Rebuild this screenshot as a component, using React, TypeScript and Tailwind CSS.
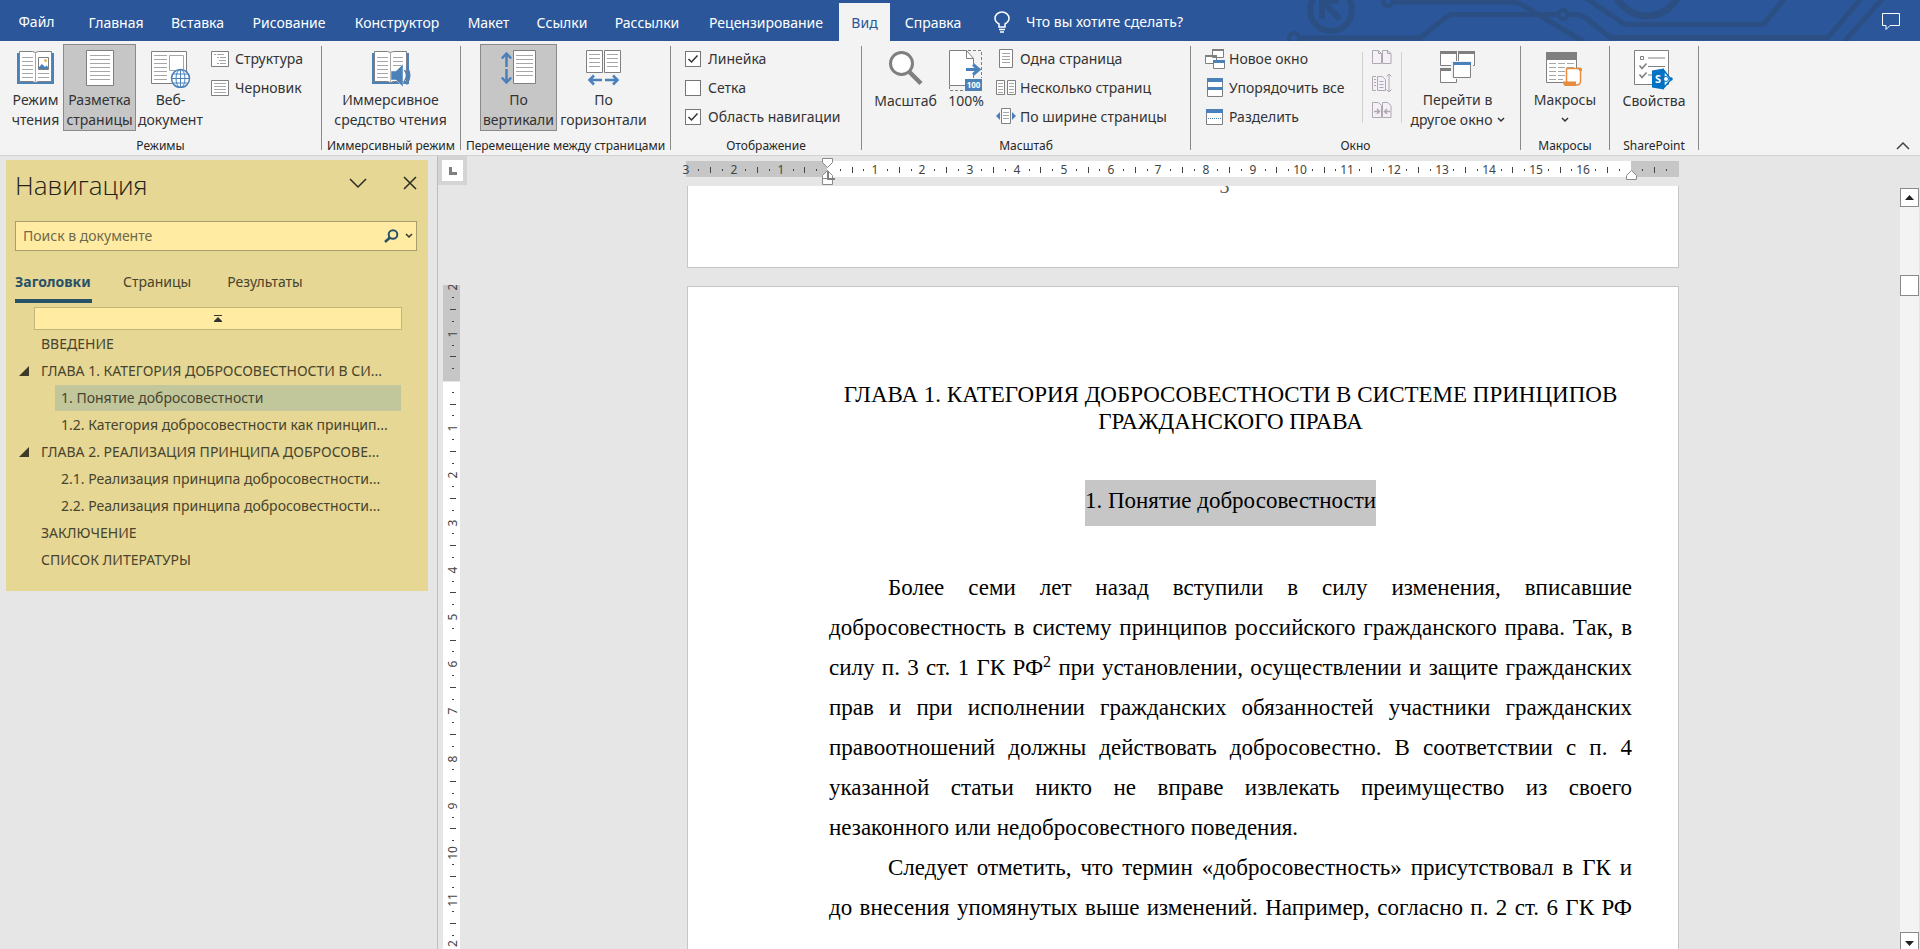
import React from "react";

const GREY = "#7f7f7f";
const BLUE = "#4a81b9";

const tabs = [
  { name: "Главная", width: "w-[82px]" },
  { name: "Вставка", width: "w-[81px]" },
  { name: "Рисование", width: "w-[102px]" },
  { name: "Конструктор", width: "w-[114px]" },
  { name: "Макет", width: "w-[69px]" },
  { name: "Ссылки", width: "w-[78px]" },
  { name: "Рассылки", width: "w-[92px]" },
  { name: "Рецензирование", width: "w-[146px]" },
  { name: "Вид", width: "w-[51px]", active: true },
  { name: "Справка", width: "w-[86px]" },
];

const headings = [
  { text: "ВВЕДЕНИЕ", level: 1 },
  { text: "ГЛАВА 1. КАТЕГОРИЯ ДОБРОСОВЕСТНОСТИ В СИ...", level: 1, open: true },
  { text: "1. Понятие добросовестности", level: 2, selected: true },
  { text: "1.2. Категория добросовестности как принцип...", level: 2 },
  { text: "ГЛАВА 2. РЕАЛИЗАЦИЯ ПРИНЦИПА ДОБРОСОВЕ...", level: 1, open: true },
  { text: "2.1. Реализация принципа добросовестности...", level: 2 },
  { text: "2.2. Реализация принципа добросовестности...", level: 2 },
  { text: "ЗАКЛЮЧЕНИЕ", level: 1 },
  { text: "СПИСОК ЛИТЕРАТУРЫ", level: 1 },
];

/* ---------- icons ---------- */

function Lines({ x, y, w, n, step = 4 }: { x: number; y: number; w: number; n: number; step?: number }) {
  const d = Array.from({ length: n }, (_, i) => `M${x} ${y + i * step + 0.5}h${w}`).join("");
  return <path d={d} stroke="#a6a6a6" fill="none" />;
}

function Book({ children }: { children?: React.ReactNode }) {
  return (
    <svg width="40" height="38" viewBox="0 0 40 38" fill="none">
      <path d="M1 3h37v31H1z" fill={BLUE} />
      <path d="M3.5 1.5h13l3 1 3-1h13v30h-13l-3 1-3-1h-13z" fill="#fff" stroke={GREY} />
      <path d="M19.5 2.5v29" stroke="#a6a6a6" />
      <Lines x={6} y={7} w={11} n={6} />
      {children}
    </svg>
  );
}

function ReadModeIcon() {
  return (
    <Book>
      <Lines x={22} y={23} w={11} n={2} />
      <path d="M22.5 7.5h10v12h-10z" fill="#fff" stroke={GREY} />
      <circle cx="29.5" cy="10.5" r="1.5" fill="#e8b25c" />
      <path d="M23 19v-2l3-3 3 3 1.5-1.5L32 17v2z" fill={BLUE} />
    </Book>
  );
}

function ImmersiveIcon() {
  return (
    <Book>
      <Lines x={22} y={7} w={10} n={3} />
      <path d="M20 21h5l7-7v23l-7-7h-5z" fill={BLUE} stroke="#f3f3f3" strokeWidth="0.5" />
      <path d="M33.5 20q4 5.5 0 11M35.5 16.5q6.5 9 0 18" stroke={BLUE} strokeWidth="1.5" />
    </Book>
  );
}

function PageIcon() {
  return (
    <svg width="28" height="38" viewBox="0 0 28 38" fill="none">
      <path d="M.5.5h27v35H.5z" fill="#fff" stroke={GREY} />
      <Lines x={4} y={5} w={20} n={7} />
    </svg>
  );
}

function WebIcon() {
  return (
    <svg width="40" height="38" viewBox="0 0 40 38" fill="none">
      <path d="M.5 1.5h35v32H.5z" fill="#fff" stroke={GREY} />
      <Lines x={3} y={5} w={13} n={7} />
      <path d="M18.5 5.5h14v15h-14z" fill="#fff" stroke="#a6a6a6" />
      <circle cx="29.5" cy="28.5" r="9" fill="#fff" stroke={BLUE} strokeWidth="1.5" />
      <ellipse cx="29.5" cy="28.5" rx="4.5" ry="9" stroke={BLUE} />
      <path d="M29.5 19.5v18M20.5 28.5h18M22 24h15M22 33h15" stroke={BLUE} />
    </svg>
  );
}

function VerticalIcon() {
  return (
    <svg width="36" height="36" viewBox="0 0 36 36" fill="none">
      <path d="M12.5.5h22v33h-22z" fill="#fff" stroke={GREY} />
      <Lines x={15} y={5} w={17} n={6} />
      <path d="M5.5 3v14M5.5 19v13M.8 8.5l4.7-5 4.7 5M.8 27.5l4.7 5 4.7-5" stroke={BLUE} strokeWidth="2.5" />
    </svg>
  );
}

function HorizontalIcon() {
  return (
    <svg width="36" height="36" viewBox="0 0 36 36" fill="none">
      <path d="M.5.5h16v22H.5zM18.5.5h16v22h-16z" fill="#fff" stroke={GREY} />
      <Lines x={3} y={4} w={11} n={4} />
      <Lines x={21} y={4} w={11} n={4} />
      <path d="M3 30h13M19 30h13M8 25.5L3.5 30 8 34.5M27 25.5l4.5 4.5-4.5 4.5" stroke={BLUE} strokeWidth="2.5" />
    </svg>
  );
}

function ZoomIcon() {
  return (
    <svg width="36" height="36" viewBox="0 0 36 36" fill="none">
      <circle cx="13.5" cy="13.5" r="11" fill="#fff" stroke={GREY} strokeWidth="3" />
      <path d="M21.5 22L33 33.5" stroke={GREY} strokeWidth="4.5" />
    </svg>
  );
}

function HundredIcon() {
  return (
    <svg width="34" height="42" viewBox="0 0 34 42" fill="none">
      <path d="M.5.5h17l7 8v27H.5z" fill="#fff" />
      <path d="M24.5 14V8.500l-7-8H.5v35H16M17.5.5v8h7M24.5 25v3" stroke={GREY} />
      <path d="M19 .5h13.500V28M.5 36v4.500H16" stroke={GREY} strokeDasharray="3 2" />
      <path d="M17 19.5h12M24 14.5l6 5-6 5" stroke={BLUE} strokeWidth="3" />
      <path d="M16 29h17v12H16z" fill={BLUE} />
      <text x="24.5" y="38" fontSize="8" fontWeight="700" textAnchor="middle" fill="#fff">100</text>
    </svg>
  );
}

function SwitchWindowIcon() {
  return (
    <svg width="36" height="34" viewBox="0 0 36 34" fill="none">
      <path d="M.5 1.5h16v14H.5zM18.5 1.5h16v14h-16zM.5 18.5h16v14H.5z" fill="#fff" stroke={GREY} />
      <path d="M0 1h17v3H0zM18 1h17v3H18zM0 18h17v3H0z" fill={GREY} />
      <path d="M11 11h22v18H11z" fill="#f3f3f3" />
      <path d="M13.5 12.5h17v15h-17z" fill="#fff" stroke={GREY} />
      <path d="M13 12h18v3H13z" fill={BLUE} />
    </svg>
  );
}

function MacrosIcon() {
  return (
    <svg width="38" height="36" viewBox="0 0 38 36" fill="none">
      <path d="M.5 2.5h30v30H.5z" fill="#fff" stroke={GREY} />
      <path d="M0 2h31v8H0z" fill={GREY} />
      <path d="M3 13.5h25M3 17.5h25M3 21.5h17M3 25.5h17M3 29.5h14" stroke="#a6a6a6" strokeDasharray="7 2" />
      <path d="M20.5 32V18.5h14V31q0 4-4 4z" fill="#fff" stroke="#e78b3f" strokeWidth="1.5" />
      <path d="M17 31.500h13V36H20q-3 0-3-4.500zM31 17.800h3q2 0 2 3.200h-2.500z" fill="#e78b3f" />
    </svg>
  );
}

function PropertiesIcon() {
  return (
    <svg width="40" height="40" viewBox="0 0 40 40" fill="none">
      <path d="M.5.5h34v34H.5z" fill="#fff" stroke={GREY} />
      <path d="M6.5 6.5h3v3h-3zM14 8h17M14 16.5h17M14 25h5" stroke={GREY} />
      <path d="M5.5 15.5l2.5 3 4.5-5M5.5 24.5l2.5 3 4.5-5" stroke={GREY} strokeWidth="1.5" />
      <path d="M30 20.5l7 9-7 8z" fill="#fff" stroke="#0072c6" strokeWidth="1.5" />
      <circle cx="32" cy="29" r="2.5" fill="#fff" stroke="#0072c6" />
      <circle cx="37" cy="29" r="1.8" fill="#0072c6" />
      <path d="M18 20.5l12-2v21l-12-2z" fill="#0072c6" />
      <text x="24" y="33" fontSize="11" fontWeight="700" textAnchor="middle" fill="#fff">S</text>
    </svg>
  );
}

function Small({ children }: { children: React.ReactNode }) {
  return (
    <svg width="20" height="20" viewBox="0 0 20 20" fill="none" className="shrink-0">
      {children}
    </svg>
  );
}

const outlineIcon = (
  <Small>
    <path d="M.5 2.5h17v15H.5z" fill="#fff" stroke={GREY} />
    <path d="M3 5.5h2m1 0h7M6 8.5h2m1 0h6M8 11.5h7M6 14.5h2m1 0h6" stroke="#a6a6a6" />
  </Small>
);
const draftIcon = (
  <Small>
    <path d="M.5 2.5h17v15H.5z" fill="#fff" stroke={GREY} />
    <Lines x={3} y={5} w={12} n={4} step={3} />
  </Small>
);
const onePageIcon = (
  <Small>
    <path d="M3.5.5h13v18h-13z" fill="#fff" stroke={GREY} />
    <Lines x={6} y={4} w={8} n={4} step={3} />
  </Small>
);
const multiPageIcon = (
  <Small>
    <path d="M.5 2.5h8v14h-8zM11.5 2.5h8v14h-8z" fill="#fff" stroke={GREY} />
    <Lines x={2} y={5} w={5} n={4} step={3} />
    <Lines x={13} y={5} w={5} n={4} step={3} />
  </Small>
);
const pageWidthIcon = (
  <Small>
    <path d="M5.5 1.5h9v15h-9z" fill="#fff" stroke={GREY} />
    <Lines x={7} y={5} w={6} n={3} step={3} />
    <path d="M4 5v8L0 9zM16 5v8l4-4z" fill={BLUE} />
  </Small>
);
const newWindowIcon = (
  <Small>
    <path d="M7.5.5h11v8h-11zM.5 6.5h11v8H.5z" fill="#fff" stroke={GREY} />
    <path d="M7 0h12v2H7zM0 6h12v2H0z" fill={GREY} />
    <path d="M8.5 11.5h11v8h-11z" fill="#fff" stroke={GREY} />
    <path d="M8 11h12v3H8z" fill={BLUE} />
  </Small>
);
const arrangeIcon = (
  <Small>
    <path d="M2.5.5h15v18h-15z" fill="#fff" stroke={GREY} />
    <path d="M2 0h16v4H2zM2 9h16v3H2z" fill={BLUE} />
  </Small>
);
const splitIcon = (
  <Small>
    <path d="M1.5 2.5h16v15h-16z" fill="#fff" stroke={GREY} />
    <path d="M1 2h17v4H1z" fill={BLUE} />
    <path d="M3 11.5h13" stroke={BLUE} strokeDasharray="1 1" />
  </Small>
);
const sideBySideIcon = (
  <Small>
    <path d="M.5 3.5h6l3 3v10h-9zM10.5 3.5h5l3.5 3v10h-8.500z" fill="#f5f0f7" stroke="#aea8b0" />
    <path d="M6.5 3.5v3h3M15.5 3.5v3H19" stroke="#aea8b0" />
  </Small>
);
const syncScrollIcon = (
  <Small>
    <path d="M4 3.5H.5v14H4M5.5 3.5h5l3 3v11h-8z" fill="#f5f0f7" stroke="#aea8b0" />
    <path d="M2 6.5h2M2 9.5h2M2 12.5h2M7.5 8.5h4M7.5 11.5h4M7.5 14.5h4M17 1v18M14.5 3.5L17 1l2.5 2.5M14.5 16.5L17 19l2.5-2.5" stroke="#aea8b0" />
  </Small>
);
const resetWindowIcon = (
  <Small>
    <path d="M.5 2.5h6l3 3v12h-9zM10.5 2.5h5l3.5 3v12h-8.500z" fill="#f5f0f7" stroke="#aea8b0" />
    <path d="M2 11.5h5M5 9l2.5 2.5L5 14M18 11.5h-5M15 9l-2.5 2.5L15 14" stroke="#aea8b0" strokeWidth="1.5" />
  </Small>
);

/* ---------- ribbon parts ---------- */

interface BigButtonProps {
  icon: React.ReactNode;
  lines: string[];
  width: string;
  active?: boolean;
  arrow?: boolean;
}

function BigButton({ icon, lines, width, active, arrow }: BigButtonProps) {
  const look = active ? "border-[#8a8a8a] bg-[#c6c6c6]" : "border-transparent";
  return (
    <button className={`${width} ${look} flex h-[87px] shrink-0 flex-col items-center whitespace-nowrap border`}>
      <span className="flex h-[46px] items-start justify-center pt-[5px]">{icon}</span>
      {lines.map((line, i) => (
        <span key={line} className="flex items-center leading-5">
          {line}
          {arrow && i === lines.length - 1 && (
            <svg width="8" height="6" viewBox="0 0 8 6" fill="none" className={line ? "ml-1" : "my-[7px]"}>
              <path d="M1 1l3 3 3-3" stroke="#333" strokeWidth="1.5" />
            </svg>
          )}
        </span>
      ))}
    </button>
  );
}

function SmallButton({ icon, label }: { icon: React.ReactNode; label: string }) {
  return (
    <button className="flex h-[29px] items-center gap-1 whitespace-nowrap">
      {icon}
      {label}
    </button>
  );
}

function CheckRow({ label, checked }: { label: string; checked?: boolean }) {
  return (
    <label className="flex h-[29px] items-center gap-[7px] whitespace-nowrap">
      <span className="grid">
        <input type="checkbox" defaultChecked={checked} className="peer col-start-1 row-start-1 size-4 appearance-none border border-[#767676] bg-white" />
        <svg width="16" height="16" viewBox="0 0 16 16" fill="none" className="pointer-events-none invisible col-start-1 row-start-1 peer-checked:visible">
          <path d="M3.5 8l3 3 6-6.5" stroke="#333" strokeWidth="1.5" />
        </svg>
      </span>
      {label}
    </label>
  );
}

function Group({ label, width, children }: { label: string; width: string; children: React.ReactNode }) {
  return (
    <section className={`${width} flex shrink-0 flex-col justify-between border-r border-[#8a8a8a]`}>
      <div className="-mt-0.5 flex h-[87px]">{children}</div>
      <h2 className="text-center text-xs leading-[9px] whitespace-nowrap text-[#262626]">{label}</h2>
    </section>
  );
}

function TitleArt() {
  return (
    <svg width="640" height="41" viewBox="0 0 640 41" fill="none" stroke="#2b4f82" strokeWidth="5" className="absolute top-0 right-0" aria-hidden="true">
      <circle cx="51" cy="10" r="21" strokeWidth="6" />
      <path d="M59 1H42v18M43 2l17 17" strokeWidth="6" />
      <circle cx="108" cy="1" r="5" strokeWidth="4" />
      <path d="M114 2h118q6 0 12 4l60 36" />
      <circle cx="14" cy="38" r="5" strokeWidth="4" />
      <path d="M19 38h121l25-20q4-3.5 8-3.5h105" />
      <circle cx="283" cy="14.5" r="4.5" strokeWidth="4" />
      <path d="M288 14.5h6q8 0 14 5l22 18h218l34-40M564 42l40-45" />
      <circle cx="367" cy="-18" r="34" strokeWidth="7" />
      <path d="M304-3l39 26q3 1.5 6 1.5h130q4 0 6-2l21-26" />
    </svg>
  );
}

function Header() {
  return (
    <header className="relative flex h-[41px] shrink-0 items-end bg-[#2b579a] text-white">
      <TitleArt />
      <nav className="relative flex h-[38px] items-end">
        <button className="h-[38px] w-[75px] pr-0.5">Файл</button>
        {tabs.map((tab) => (
          <button key={tab.name} className={`${tab.width} ${tab.active ? "bg-[#f3f3f3] text-[#2b579a]" : ""} h-[38px] pt-0.5`}>
            {tab.name}
          </button>
        ))}
      </nav>
      <button className="relative ml-[18px] flex h-[38px] items-center gap-4">
        <svg width="16" height="22" viewBox="0 0 16 22" fill="none" stroke="#fff" strokeWidth="1.5">
          <path d="M5 16v-3Q1 10.500 1 7.500a7 6.500 0 0 1 14 0q0 3-4 5.500v3zM5 18.500h6M6 21h4" />
        </svg>
        Что вы хотите сделать?
      </button>
      <button className="relative mr-[19px] ml-auto flex h-[38px] items-center" aria-label="Примечания">
        <svg width="19" height="18" viewBox="0 0 19 18" fill="none" stroke="#fff">
          <path d="M.5.5h17v12H8l-4 4v-4H.5z" />
        </svg>
      </button>
    </header>
  );
}

function Ribbon() {
  return (
    <div className="flex h-[115px] shrink-0 border-b border-[#d2d2d2] bg-[#f3f3f3] pt-[5px] pb-[5px] text-[#333]">
      <Group label="Режимы" width="w-[322px]">
        <div className="flex pl-2">
          <BigButton icon={<ReadModeIcon />} lines={["Режим", "чтения"]} width="w-[55px]" />
          <BigButton icon={<PageIcon />} lines={["Разметка", "страницы"]} width="w-[73px]" active />
          <BigButton icon={<WebIcon />} lines={["Веб-", "документ"]} width="w-[69px]" />
        </div>
        <div className="flex flex-col pl-1.5">
          <SmallButton icon={outlineIcon} label="Структура" />
          <SmallButton icon={draftIcon} label="Черновик" />
        </div>
      </Group>
      <Group label="Иммерсивный режим" width="w-[139px]">
        <BigButton icon={<ImmersiveIcon />} lines={["Иммерсивное", "средство чтения"]} width="w-[137px]" />
      </Group>
      <Group label="Перемещение между страницами" width="w-[210px]">
        <div className="flex pl-[19px]">
          <BigButton icon={<VerticalIcon />} lines={["По", "вертикали"]} width="w-[77px]" active />
          <BigButton icon={<HorizontalIcon />} lines={["По", "горизонтали"]} width="w-[93px]" />
        </div>
      </Group>
      <Group label="Отображение" width="w-[191px]">
        <div className="flex flex-col pl-[14px]">
          <CheckRow label="Линейка" checked />
          <CheckRow label="Сетка" />
          <CheckRow label="Область навигации" checked />
        </div>
      </Group>
      <Group label="Масштаб" width="w-[329px]">
        <div className="flex pl-[7px]">
          <BigButton icon={<ZoomIcon />} lines={["Масштаб"]} width="w-[73px]" />
          <BigButton icon={<HundredIcon />} lines={["100%"]} width="w-[48px]" />
        </div>
        <div className="flex flex-col pl-1.5">
          <SmallButton icon={onePageIcon} label="Одна страница" />
          <SmallButton icon={multiPageIcon} label="Несколько страниц" />
          <SmallButton icon={pageWidthIcon} label="По ширине страницы" />
        </div>
      </Group>
      <Group label="Окно" width="w-[330px]">
        <div className="flex w-[171px] flex-col pl-[14px]">
          <SmallButton icon={newWindowIcon} label="Новое окно" />
          <SmallButton icon={arrangeIcon} label="Упорядочить все" />
          <SmallButton icon={splitIcon} label="Разделить" />
        </div>
        <div className="mt-2 mb-2 flex w-10 border-x border-[#d0d0d0] pl-[9px]">
          <div className="-mt-2 flex flex-col">
            <button className="flex h-[29px] items-center" aria-label="Рядом">{sideBySideIcon}</button>
            <button className="flex h-[29px] items-center" aria-label="Синхронная прокрутка">{syncScrollIcon}</button>
            <button className="flex h-[29px] items-center" aria-label="Восстановить расположение окна">{resetWindowIcon}</button>
          </div>
        </div>
        <BigButton icon={<SwitchWindowIcon />} lines={["Перейти в", "другое окно"]} width="w-[111px]" arrow />
      </Group>
      <Group label="Макросы" width="w-[89px]">
        <BigButton icon={<MacrosIcon />} lines={["Макросы", ""]} width="w-[88px]" arrow />
      </Group>
      <Group label="SharePoint" width="w-[89px]">
        <BigButton icon={<PropertiesIcon />} lines={["Свойства"]} width="w-[88px]" />
      </Group>
      <button className="mt-auto mr-2.5 ml-auto" aria-label="Свернуть ленту">
        <svg width="14" height="8" viewBox="0 0 14 8" fill="none">
          <path d="M1 7l6-6 6 6" stroke="#444" strokeWidth="1.5" />
        </svg>
      </button>
    </div>
  );
}

/* ---------- navigation pane ---------- */

function NavigationPane() {
  return (
    <aside className="w-[438px] shrink-0 border-r border-[#bdbdbd] pt-1 pr-[9px] pl-1.5">
      <div className="flex h-[431px] flex-col bg-[#e6d794] px-[9px] text-[#48442e]">
        <div className="flex h-[61px] items-start pt-[5px]">
          <h1 className="font-['Open_Sans',sans-serif] text-[26px] leading-10 font-light text-[#22221a]">Навигация</h1>
          <button className="mt-[13px] mr-9 ml-auto" aria-label="Параметры области задач">
            <svg width="18" height="11" viewBox="0 0 18 11" fill="none">
              <path d="M1 1l8 8 8-8" stroke="#2b2b22" strokeWidth="1.5" />
            </svg>
          </button>
          <button className="mt-[11px] mr-0.5" aria-label="Закрыть">
            <svg width="14" height="14" viewBox="0 0 14 14" fill="none">
              <path d="M1 1l12 12M13 1L1 13" stroke="#2b2b22" strokeWidth="1.5" />
            </svg>
          </button>
        </div>
        <div className="mr-0.5 flex h-[30px] shrink-0 items-center border border-[#a79e6c] bg-[#ffeca2] pr-[3px]">
          <input
            type="text"
            placeholder="Поиск в документе"
            aria-label="Поиск в документе"
            className="min-w-0 flex-1 bg-transparent px-[7px] outline-none placeholder:text-[#706a4c]"
          />
          <button aria-label="Найти">
            <svg width="15" height="14" viewBox="0 0 15 14" fill="none" stroke="#285168" strokeWidth="2">
              <circle cx="9" cy="5.5" r="4.3" />
              <path d="M6 8.5L1 13" strokeWidth="2.5" />
            </svg>
          </button>
          <button className="ml-1.5" aria-label="Параметры поиска">
            <svg width="8" height="6" viewBox="0 0 8 6" fill="none">
              <path d="M1 1l3 3 3-3" stroke="#333" strokeWidth="1.5" />
            </svg>
          </button>
        </div>
        <div className="mt-[19px] flex h-[33px] shrink-0 items-start">
          <button className="h-[33px] w-[77px] border-b-4 border-[#285168] pb-[5px] text-left font-bold text-[#285168]">Заголовки</button>
          <button className="ml-[31px] h-[29px] pb-[5px]">Страницы</button>
          <button className="ml-9 h-[29px] pb-[5px]">Результаты</button>
        </div>
        <button className="mt-1 mr-[17px] ml-[19px] flex h-[23px] shrink-0 items-center justify-center border border-[#c2b57a] bg-[#ffeca2]" aria-label="Перейти к началу">
          <svg width="8" height="7" viewBox="0 0 8 7">
            <path d="M0 0h8v1H0zM4 2l4 4v1H0V6z" fill="#333" />
          </svg>
        </button>
        <ul>
          {headings.map((h) => (
            <li key={h.text} className="flex h-[27px] items-center pr-[18px]">
              <span className="w-5 shrink-0">
                {h.open && (
                  <svg width="10" height="10" viewBox="0 0 10 10" className="ml-1">
                    <path d="M10 0v10H0z" fill="#3d3a28" />
                  </svg>
                )}
              </span>
              <a
                href="#"
                className={`${h.level === 2 ? "ml-5" : ""} ${h.selected ? "bg-[#c1c79b]" : ""} h-[26px] flex-1 pl-[6px] leading-[26px] whitespace-nowrap`}
              >
                {h.text}
              </a>
            </li>
          ))}
        </ul>
      </div>
    </aside>
  );
}

/* ---------- rulers ---------- */

// 47.2px is one centimetre at the current zoom
const CM = 47.2;

function quarterMarks(from: number, to: number) {
  const marks: { pos: number; kind: "dot" | "tick" | "num"; value: number }[] = [];
  for (let q = from; q <= to; q++) {
    if (q === 0) continue;
    const kind = q % 4 === 0 ? "num" : q % 2 === 0 ? "tick" : "dot";
    marks.push({ pos: Math.round((q * CM) / 4), kind, value: Math.abs(q / 4) });
  }
  return marks;
}

function HorizontalRuler() {
  return (
    <svg width="994" height="31" viewBox="0 0 994 31" overflow="visible" fontSize="12" className="shrink-0">
      <path d="M0 5h993v16H0z" fill="#fff" />
      <path d="M0 5h141v16H0zM945 5h48v16h-48z" fill="#c6c6c6" />
      {quarterMarks(-12, 71).map(({ pos, kind, value }) => {
        const x = 142 + pos;
        if (Math.abs(x - 945) < 6) return null;
        if (kind === "num") {
          return <text key={pos} x={x} y="18" textAnchor="middle" fill="#444">{value}</text>;
        }
        return <rect key={pos} x={x} y={kind === "tick" ? 11 : 13} width="1" height={kind === "tick" ? 6 : 2} fill="#444" />;
      })}
      <g fill="#fff" stroke="#8a8a8a">
        <path d="M136.5 2.5h10v4l-5 5-5-5z" />
        <path d="M141.5 14.5l5 5v3h-10v-3zM136.5 22.5h10v6h-10z" />
        <path d="M945.5 14.5l5 5v4h-10v-4z" />
      </g>
      <path d="M141 15h2v7h6v2h-8z" fill={GREY} />
    </svg>
  );
}

function VerticalRuler() {
  return (
    <svg width="17" height="664" viewBox="0 0 17 664" fontSize="12" className="mt-[99px] shrink-0">
      <path d="M0 97h17v567H0z" fill="#fff" />
      <path d="M0 0h17v96H0z" fill="#c6c6c6" />
      {quarterMarks(-8, 48).map(({ pos, kind, value }) => {
        const y = 95 + pos;
        if (kind === "num") {
          return (
            <text key={pos} transform={`translate(14 ${y + 1}) rotate(-90)`} textAnchor="middle" fill="#444">{value}</text>
          );
        }
        return <rect key={pos} x={kind === "tick" ? 7 : 9} y={y} width={kind === "tick" ? 6 : 2} height="1" fill="#444" />;
      })}
    </svg>
  );
}

/* ---------- document ---------- */

function DocumentPages() {
  return (
    <main className="flex min-w-0 flex-1 flex-col items-center overflow-hidden pr-px font-['Liberation_Serif',serif] text-[23px] text-black">
      <div className="h-[82px] w-[992px] shrink-0 border border-t-0 border-[#c6c6c6] bg-white pr-[58px] pl-[141px]">
        <p className="-mt-2.5 text-center text-xl leading-5 text-[#595959]">3</p>
      </div>
      <article className="mt-[18px] w-[992px] flex-1 shrink-0 border border-b-0 border-[#c6c6c6] bg-white pt-[94px] pr-[46px] pl-[141px]">
        <h1 className="text-center leading-[27px]">
          ГЛАВА 1. КАТЕГОРИЯ ДОБРОСОВЕСТНОСТИ В СИСТЕМЕ ПРИНЦИПОВ ГРАЖДАНСКОГО ПРАВА
        </h1>
        <h2 className="mt-[45px] flex justify-center leading-10">
          <span className="bg-[#c6c6c6] pt-px pb-[5px]">1. Понятие добросовестности</span>
        </h2>
        <div className="mt-[42px] text-justify leading-10">
          <p className="indent-[59px]">
            Более семи лет назад вступили в силу изменения, вписавшие добросовестность в систему принципов российского
            гражданского права. Так, в силу п. 3 ст. 1 ГК РФ<sup className="text-base leading-none">2</sup> при
            установлении, осуществлении и защите гражданских прав и при исполнении гражданских обязанностей участники
            гражданских правоотношений должны действовать добросовестно. В соответствии с п. 4 указанной статьи никто не
            вправе извлекать преимущество из своего незаконного&nbsp;или недобросовестного поведения.
          </p>
          {/* the paragraph runs on past the visible area, so its last line is justified too */}
          <p className="indent-[59px] [text-align-last:justify]">
            Следует отметить, что термин «добросовестность» присутствовал в ГК и до внесения упомянутых выше изменений.
            Например, согласно п. 2 ст. 6 ГК РФ
          </p>
        </div>
      </article>
    </main>
  );
}

function ScrollBar() {
  return (
    <div className="mt-0.5 mr-px flex w-[19px] shrink-0 flex-col bg-[#f3f3f3]">
      <button className="flex h-[19px] items-center justify-center border border-[#8a8a8a] bg-white" aria-label="Вверх">
        <svg width="9" height="5" viewBox="0 0 9 5"><path d="M4.5 0L9 5H0z" fill="#222" /></svg>
      </button>
      <div className="mt-[68px] h-[21px] border border-[#8a8a8a] bg-white" />
      <button className="mt-auto flex h-[17px] items-center justify-center border border-b-0 border-[#8a8a8a] bg-white pt-1" aria-label="Вниз">
        <svg width="9" height="5" viewBox="0 0 9 5"><path d="M0 0h9L4.5 5z" fill="#222" /></svg>
      </button>
    </div>
  );
}

export default function App() {
  return (
    <div className="flex h-screen flex-col overflow-hidden bg-[#e6e6e6] font-['Noto_Sans',sans-serif] text-sm">
      <Header />
      <Ribbon />
      <div className="flex min-h-0 flex-1">
        <NavigationPane />
        <div className="flex min-w-0 flex-1 flex-col">
          <div className="flex h-[30px] shrink-0">
            <button className="flex size-[29px] shrink-0 items-center justify-center border-4 border-[#d4d4d4] bg-white" aria-label="Табуляция">
              <svg width="8" height="8" viewBox="0 0 8 8"><path d="M0 0h3v5h5v3H0z" fill={GREY} /></svg>
            </button>
            <div className="flex flex-1 justify-center overflow-hidden pr-px">
              <HorizontalRuler />
            </div>
            <div className="w-5 shrink-0" />
          </div>
          <div className="flex min-h-0 flex-1">
            <div className="flex w-[29px] shrink-0 flex-col items-start overflow-hidden pl-[5px]">
              <VerticalRuler />
            </div>
            <DocumentPages />
            <ScrollBar />
          </div>
        </div>
      </div>
    </div>
  );
}
